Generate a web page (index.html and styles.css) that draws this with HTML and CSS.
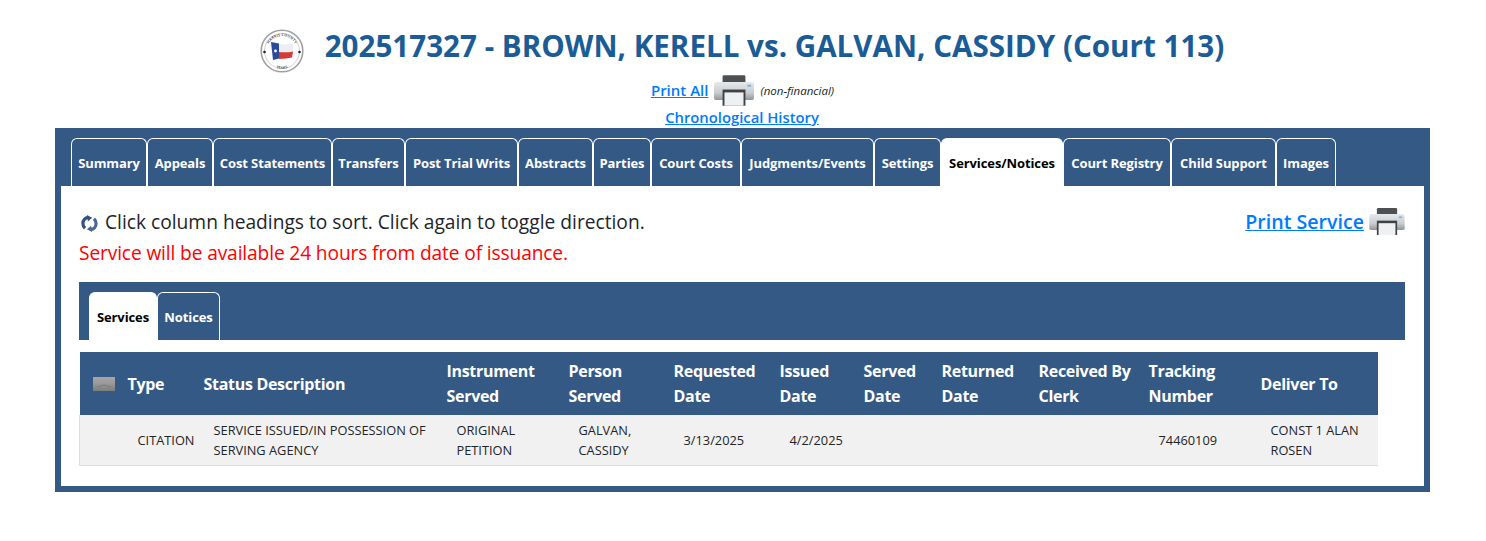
FILE: index.html
```html
<!DOCTYPE html>
<html lang="en">
<head>
<meta charset="utf-8">
<title>202517327 - BROWN, KERELL vs. GALVAN, CASSIDY (Court 113)</title>
<link rel="stylesheet" href="styles.css">
</head>
<body>
<svg class="defs" width="0" height="0" aria-hidden="true">
  <defs>
    <linearGradient id="pbody" x1="0" y1="0" x2="0" y2="1">
      <stop offset="0" stop-color="#e6e9eb"/><stop offset=".6" stop-color="#c9cdd0"/><stop offset="1" stop-color="#8f9598"/>
    </linearGradient>
    <linearGradient id="mailfill" x1="0" y1="0" x2="0" y2="1">
      <stop offset="0" stop-color="#a6a6a6"/><stop offset=".45" stop-color="#9a9a9a"/><stop offset="1" stop-color="#7d7d7d"/>
    </linearGradient>
    <symbol id="printer" viewBox="0 0 42 32">
      <rect x="9" y="0" width="24" height="9" rx="1.500" fill="#4d5053"/>
      <path d="M3 7h36a3 3 0 0 1 3 3v14a2 2 0 0 1-2 2H2a2 2 0 0 1-2-2V10a3 3 0 0 1 3-3z" fill="url(#pbody)"/>
      <rect x="35" y="10" width="4" height="2" fill="#6fb6e6"/>
      <rect x="9" y="15" width="24" height="17" fill="#3f4245"/>
      <rect x="11" y="18" width="20" height="14" fill="#eef0f1"/>
    </symbol>
  </defs>
</svg>

<header class="head">
  <h1 class="title">
    <svg class="seal" viewBox="0 0 44 44" role="img" aria-label="Harris County seal">
      <defs><path id="arcTop" d="M7 22a15 15 0 0 1 30 0"/><path id="arcBot" d="M6 24a16 16 0 0 0 32 0"/></defs>
      <circle cx="22" cy="22" r="20.800" fill="#fff" stroke="#a0a0a0" stroke-width="1.600"/>
      <circle cx="22" cy="22" r="17.500" fill="none" stroke="#c4c4c4" stroke-width=".8"/>
      <text class="seal-text"><textPath href="#arcTop" startOffset="50%" text-anchor="middle">HARRIS COUNTY</textPath></text>
      <text class="seal-text"><textPath href="#arcBot" startOffset="50%" text-anchor="middle">TEXAS</textPath></text>
      <circle cx="4.500" cy="23" r="1.300" fill="#222"/><circle cx="39.500" cy="23" r="1.300" fill="#222"/>
      <path d="M11 13l8 1.500v15L13 31z" fill="#2a4b9b"/>
      <path d="M19 14.500c4 1.500 7 1.500 11 0l3 1v7c-4 1-9 1-14 .500z" fill="#eceef3"/>
      <path d="M19 23c5 .5 10 .5 14-.5l-1 6c-4 1-8 1-13 1.500z" fill="#d63a35"/>
      <circle cx="15.500" cy="22" r="1.400" fill="#fff"/>
    </svg>
    <span>202517327 - BROWN, KERELL vs. GALVAN, CASSIDY (Court 113)</span>
  </h1>
  <div class="print-all">
    <a class="link" href="#">Print All</a>
    <svg class="printer-lg"><use href="#printer"/></svg>
    <em class="note">(non-financial)</em>
  </div>
  <div class="history"><a class="link" href="#">Chronological History</a></div>
</header>

<main class="panel">
  <nav class="tabs">
    <a class="tab w-76" href="#">Summary</a>
    <a class="tab w-66" href="#">Appeals</a>
    <a class="tab w-119" href="#">Cost Statements</a>
    <a class="tab w-73" href="#">Transfers</a>
    <a class="tab w-113" href="#">Post Trial Writs</a>
    <a class="tab w-75" href="#">Abstracts</a>
    <a class="tab w-58" href="#">Parties</a>
    <a class="tab w-90" href="#">Court Costs</a>
    <a class="tab w-133" href="#">Judgments/Events</a>
    <a class="tab w-67" href="#">Settings</a>
    <a class="tab tab-active w-122" href="#">Services/Notices</a>
    <a class="tab w-108" href="#">Court Registry</a>
    <a class="tab w-105" href="#">Child Support</a>
    <a class="tab w-60" href="#">Images</a>
  </nav>

  <section class="content">
    <div class="intro">
      <div class="intro-text">
        <p class="hint">
          <svg class="sort-icon" viewBox="0 0 16 16" aria-hidden="true">
            <path d="M7 2.200C3.800 2.600 1.800 5 1.800 8c0 1.800.8 3.400 2 4.500" fill="none" stroke="#34507f" stroke-width="3"/>
            <path d="M5.500 0l5 2.500-4 3.500z" fill="#34507f"/>
            <path d="M9 13.800c3.200-.4 5.200-2.800 5.200-5.800 0-1.800-.8-3.400-2-4.500" fill="none" stroke="#4a6796" stroke-width="3"/>
            <path d="M10.500 16l-5-2.500 4-3.500z" fill="#4a6796"/>
          </svg>
          Click column headings to sort. Click again to toggle direction.
        </p>
        <p class="warn">Service will be available 24 hours from date of issuance.</p>
      </div>
      <div class="print-service">
        <a class="link" href="#">Print Service</a>
        <svg class="printer-md"><use href="#printer"/></svg>
      </div>
    </div>

    <nav class="subtabs">
      <a class="tab tab-active w-68" href="#">Services</a>
      <a class="tab w-63" href="#">Notices</a>
    </nav>

    <table class="grid">
      <colgroup>
        <col class="c48"><col class="c76"><col class="c243"><col class="c122"><col class="c105"><col class="c106"><col class="c84"><col class="c78"><col class="c97"><col class="c110"><col class="c112"><col class="c117">
      </colgroup>
      <thead>
        <tr>
          <th class="mail-cell"><svg class="mail" viewBox="0 0 22 14" aria-hidden="true"><rect width="22" height="14" fill="url(#mailfill)"/><path d="M4 10l7-2 7 2" fill="none" stroke="#747474" stroke-width=".8"/></svg></th>
          <th>Type</th>
          <th>Status Description</th>
          <th>Instrument Served</th>
          <th>Person Served</th>
          <th>Requested Date</th>
          <th>Issued Date</th>
          <th>Served Date</th>
          <th>Returned Date</th>
          <th>Received By Clerk</th>
          <th>Tracking Number</th>
          <th>Deliver To</th>
        </tr>
      </thead>
      <tbody>
        <tr>
          <td></td>
          <td>CITATION</td>
          <td>SERVICE ISSUED/IN POSSESSION OF SERVING AGENCY</td>
          <td>ORIGINAL PETITION</td>
          <td>GALVAN, CASSIDY</td>
          <td>3/13/2025</td>
          <td>4/2/2025</td>
          <td></td>
          <td></td>
          <td></td>
          <td>74460109</td>
          <td>CONST 1 ALAN ROSEN</td>
        </tr>
      </tbody>
    </table>
  </section>
</main>
</body>
</html>
```

FILE: styles.css
```css
* { box-sizing: border-box; }
html, body { margin: 0; padding: 0; background: #fff; }
body {
  font-family: "Open Sans", "Noto Sans", "Liberation Sans", sans-serif;
  color: #212529;
  height: 541px;
  overflow: hidden;
}
.defs { display: block; height: 0; }
.head { text-align: center; }
.title {
  margin: 0 0 0 -2px;
  padding-top: 28px;
  height: 74px;
  display: flex;
  justify-content: center;
  align-items: flex-start;
  gap: 21px;
  font-size: 29.600px;
  line-height: 36px;
  font-weight: 700;
  letter-spacing: 0;
  color: #1b5c97;
}
.seal { width: 44px; height: 44px; margin-top: 1px; }
.seal-text { font-size: 3.600px; font-weight: 700; fill: #555; letter-spacing: .2px; }
.print-all {
  height: 32px;
  display: flex;
  justify-content: center;
  align-items: center;
  gap: 6px;
  margin-left: -1px;
}
.link { color: #007bff; font-weight: 600; text-decoration: underline; }
.print-all .link { font-size: 15px; }
.history .link { font-size: 14.800px; }
.note { font-size: 11.500px; color: #212529; }
.printer-lg { width: 40px; height: 31px; }
.history { height: 22px; line-height: 22px; margin-left: -2px; }
.panel {
  height: 364px;
  margin: 0 56px 0 55px;
  background: #355985;
  padding: 10px 6px 6px;
  display: flex;
  flex-direction: column;
}
.tabs { display: flex; height: 48px; padding-left: 10px; flex: none; }
.subtabs { display: flex; height: 58px; padding: 10px 0 0 10px; background: #355985; margin: 0 0 12px; }
.tab {
  display: flex;
  align-items: center;
  justify-content: center;
  height: 100%;
  border: 1px solid #fff;
  border-bottom: 0;
  border-radius: 6px 6px 0 0;
  background: #355985;
  color: #fff;
  font-size: 13px;
  font-weight: 700;
  letter-spacing: -.1px;
  text-decoration: none;
  white-space: nowrap;
  flex: none;
}
.tab-active { background: #fff; color: #000; border-color: #fff; }
.w-76 { width: 76px; } .w-66 { width: 66px; } .w-119 { width: 119px; } .w-73 { width: 73px; }
.w-113 { width: 113px; } .w-75 { width: 75px; } .w-58 { width: 58px; } .w-90 { width: 90px; }
.w-133 { width: 133px; } .w-122 { width: 122px; } .w-108 { width: 108px; } .w-105 { width: 105px; }
.w-60 { width: 60px; } .w-67 { width: 67px; } .w-68 { width: 68px; } .w-63 { width: 63px; }
.content {
  flex: 1;
  background: #fff;
  padding: 20px 19px 0 18px;
}
.intro { display: flex; justify-content: space-between; height: 76px; }
.intro-text p { margin: 0; }
.hint { font-size: 19.200px; line-height: 31px; display: flex; align-items: center; gap: 7px; }
.warn { font-size: 19.200px; line-height: 31px; letter-spacing: -.14px; color: #f00; }
.sort-icon { width: 17px; height: 17px; margin-top: 3px; margin-left: 2px; }
.print-service { display: flex; align-items: center; gap: 5px; height: 31px; }
.print-service .link { font-size: 19.600px; }
.printer-md { width: 36px; height: 27px; }
.grid {
  table-layout: fixed;
  width: 1298px;
  border-collapse: collapse;
}
.c48 { width: 48px; } .c76 { width: 76px; } .c243 { width: 243px; } .c122 { width: 122px; }
.c105 { width: 105px; } .c106 { width: 106px; } .c84 { width: 84px; } .c78 { width: 78px; }
.c97 { width: 97px; } .c110 { width: 110px; } .c112 { width: 112px; } .c117 { width: 117px; }
.grid th {
  height: 63px;
  padding: 1px 10px 0 0;
  background: #355985;
  color: #fff;
  font-size: 16px;
  line-height: 25px;
  font-weight: 700;
  letter-spacing: -.3px;
  text-align: left;
  vertical-align: middle;
}
.grid .mail-cell { padding-left: 13px; }
.mail { width: 22px; height: 14px; display: block; }
.grid td {
  height: 50px;
  padding: 0 10px;
  background: #f1f1f1;
  border-bottom: 1px solid #ddd;
  font-size: 12.800px;
  line-height: 20px;
  vertical-align: middle;
}
.grid td:first-child { border-left: 1px solid #ddd; }
```
